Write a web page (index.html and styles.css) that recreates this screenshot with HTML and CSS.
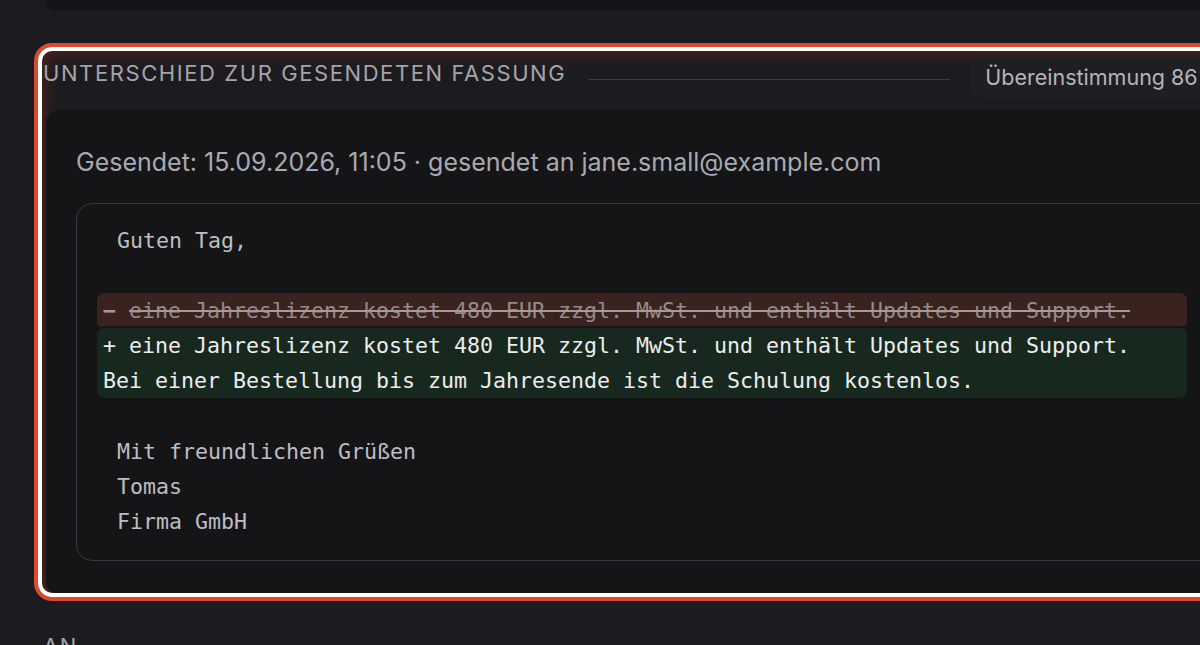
FILE: index.html
```html
<!DOCTYPE html>
<html lang="de">
<head>
<meta charset="utf-8">
<title>Unterschied zur gesendeten Fassung</title>
<link rel="stylesheet" href="styles.css">
</head>
<body>
<div class="page">
  <div class="top-card"></div>
  <section class="diff-section">
    <header class="section-head">
      <h2 class="section-title">Unterschied zur gesendeten Fassung</h2>
      <span class="head-rule"></span>
      <span class="match-pill">Übereinstimmung 86%</span>
    </header>
    <div class="diff-card">
      <p class="sent-meta">Gesendet: 15.09.2026, 11:05 · gesendet an jane.small@example.com</p>
      <div class="diff-box">
        <div class="line ctx"> Guten Tag,</div>
        <div class="line ctx"> </div>
        <div class="chunk del"><div class="line"><span class="sign">−</span> <s>eine Jahreslizenz kostet 480 EUR zzgl. MwSt. und enthält Updates und Support.</s></div></div>
        <div class="chunk add"><div class="line">+ eine Jahreslizenz kostet 480 EUR zzgl. MwSt. und enthält Updates und Support.</div><div class="line">Bei einer Bestellung bis zum Jahresende ist die Schulung kostenlos.</div></div>
        <div class="line ctx"> </div>
        <div class="line ctx"> Mit freundlichen Grüßen</div>
        <div class="line ctx"> Tomas</div>
        <div class="line ctx"> Firma GmbH</div>
      </div>
    </div>
  </section>
  <h3 class="next-title">An</h3>
</div>
</body>
</html>
```

FILE: styles.css
```css
html, body {
  margin: 0;
  padding: 0;
  background: #1c1c20;
  overflow: hidden;
}
body {
  width: 1200px;
  height: 645px;
  font-family: Inter, "Noto Sans", sans-serif;
}
.page {
  display: flex;
  flex-direction: column;
  width: 1300px;
}
.top-card {
  height: 11px;
  margin-left: 45px;
  background: #151518;
  border-radius: 0 0 14px 14px;
}
.diff-section {
  margin: 36px 0 0 38px;
  border: 4px solid #ffffff;
  border-radius: 14px;
  box-shadow: 0 0 0 4px #dd4a2e, inset 0 0 18px 2px rgba(150, 40, 25, 0.45);
  width: 1300px;
  height: 542px;
  display: flex;
  flex-direction: column;
}
.section-head {
  display: flex;
  align-items: flex-start;
  height: 59px;
  padding-left: 1px;
  flex-shrink: 0;
}
.section-title {
  margin: 8px 0 0;
  font-size: 22px;
  line-height: 28px;
  font-weight: 400;
  letter-spacing: 0.072em;
  text-transform: uppercase;
  color: #a4a4ab;
  white-space: nowrap;
}
.head-rule {
  width: 362px;
  height: 1px;
  background: #3a3a40;
  margin: 28px 20px 0 22px;
}
.match-pill {
  display: inline-flex;
  align-items: center;
  height: 40px;
  padding: 0 15px;
  margin-top: 6px;
  background: #1f1f23;
  border-radius: 10px;
  font-size: 21.5px;
  color: #b4b4ba;
  white-space: nowrap;
}
.diff-card {
  flex: 1;
  margin-left: 4px;
  background: #151517;
  border-radius: 14px 0 0 10px;
  padding: 34px 0 0 30px;
  display: flex;
  flex-direction: column;
}
.sent-meta {
  margin: 0;
  font-size: 25px;
  line-height: 36px;
  color: #a9a9b0;
}
.diff-box {
  margin-top: 23px;
  width: 1122px;
  border: 1px solid #38383e;
  border-radius: 16px;
  padding: 19px 0 21px 20px;
  font-family: "DejaVu Sans Mono", "Liberation Mono", monospace;
  font-size: 21.6px;
  color: #bdbdc3;
}
.line {
  height: 35px;
  line-height: 35px;
  white-space: pre;
  padding-left: 7px;
}
.chunk {
  width: 1090px;
  border-radius: 7px;
}
.chunk .line {
  padding-left: 6px;
}
.del {
  background: #3a221e;
  color: #948a88;
}
.del s {
  text-decoration-thickness: 2px;
  text-decoration-color: #a59c9a;
}
.del .sign {
  color: #a09897;
  font-weight: 700;
}
.add {
  background: #17281f;
  color: #ececee;
  border-top: 2px solid #151517;
  margin-top: -2px;
  margin-bottom: 1px;
  background-clip: padding-box;
}
.next-title {
  margin: 36px 0 0 43px;
  font-size: 22px;
  font-weight: 400;
  letter-spacing: 0.075em;
  text-transform: uppercase;
  color: #a4a4ab;
}
```
